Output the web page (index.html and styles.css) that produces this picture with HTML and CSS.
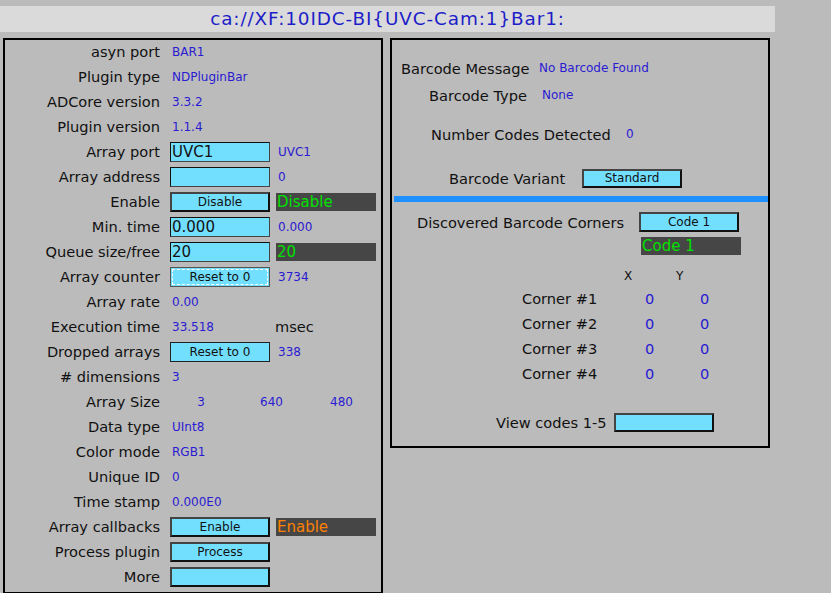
FILE: index.html
```html
<!DOCTYPE html>
<html>
<head>
<meta charset="utf-8">
<link rel="stylesheet" href="styles.css">
</head>
<body>
<div class="title">ca://XF:10IDC-BI{UVC-Cam:1}Bar1:</div>
<div class="main">
  <div class="panel left">
    <div class="row"><span class="lbl">asyn port</span><span class="val">BAR1</span></div>
    <div class="row"><span class="lbl">Plugin type</span><span class="val">NDPluginBar</span></div>
    <div class="row"><span class="lbl">ADCore version</span><span class="val">3.3.2</span></div>
    <div class="row"><span class="lbl">Plugin version</span><span class="val">1.1.4</span></div>
    <div class="row"><span class="lbl">Array port</span><span class="inp">UVC1</span><span class="val extra">UVC1</span></div>
    <div class="row"><span class="lbl">Array address</span><span class="inp"></span><span class="val extra">0</span></div>
    <div class="row"><span class="lbl">Enable</span><span class="btn">Disable</span><span class="dark green">Disable</span></div>
    <div class="row"><span class="lbl">Min. time</span><span class="inp">0.000</span><span class="val extra">0.000</span></div>
    <div class="row"><span class="lbl">Queue size/free</span><span class="inp">20</span><span class="dark green">20</span></div>
    <div class="row"><span class="lbl">Array counter</span><span class="btn focus">Reset to 0</span><span class="val extra">3734</span></div>
    <div class="row"><span class="lbl">Array rate</span><span class="val">0.00</span></div>
    <div class="row"><span class="lbl">Execution time</span><span class="val wide">33.518</span><span class="unit">msec</span></div>
    <div class="row"><span class="lbl">Dropped arrays</span><span class="btn thin">Reset to 0</span><span class="val extra">338</span></div>
    <div class="row"><span class="lbl"># dimensions</span><span class="val">3</span></div>
    <div class="row"><span class="lbl">Array Size</span><span class="dims"><span class="d1">3</span><span class="d2">640</span><span class="d3">480</span></span></div>
    <div class="row"><span class="lbl">Data type</span><span class="val">UInt8</span></div>
    <div class="row"><span class="lbl">Color mode</span><span class="val">RGB1</span></div>
    <div class="row"><span class="lbl">Unique ID</span><span class="val">0</span></div>
    <div class="row"><span class="lbl">Time stamp</span><span class="val">0.000E0</span></div>
    <div class="row"><span class="lbl">Array callbacks</span><span class="btn">Enable</span><span class="dark orange">Enable</span></div>
    <div class="row"><span class="lbl">Process plugin</span><span class="btn">Process</span></div>
    <div class="row"><span class="lbl">More</span><span class="btn"></span></div>
  </div>
  <div class="panel right">
    <div class="rrow r1"><span class="rl">Barcode Message</span><span class="rv">No Barcode Found</span></div>
    <div class="rrow r2"><span class="rl">Barcode Type</span><span class="rv">None</span></div>
    <div class="rrow r3"><span class="rl">Number Codes Detected</span><span class="rv">0</span></div>
    <div class="rrow r4"><span class="rl">Barcode Variant</span><span class="btn rbtn">Standard</span></div>
    <div class="sep"></div>
    <div class="rrow r5"><span class="rl">Discovered Barcode Corners</span><span class="btn rbtn">Code 1</span></div>
    <div class="rrow r6"><span class="dark green">Code 1</span></div>
    <div class="rrow r7"><span class="hx">X</span><span class="hy">Y</span></div>
    <div class="corner"><span class="cl">Corner #1</span><span class="cx">0</span><span class="cy">0</span></div>
    <div class="corner"><span class="cl">Corner #2</span><span class="cx">0</span><span class="cy">0</span></div>
    <div class="corner"><span class="cl">Corner #3</span><span class="cx">0</span><span class="cy">0</span></div>
    <div class="corner"><span class="cl">Corner #4</span><span class="cx">0</span><span class="cy">0</span></div>
    <div class="rrow r8"><span class="rl">View codes 1-5</span><span class="btn rbtn"></span></div>
  </div>
</div>
</body>
</html>
```
FILE: styles.css
```css
html, body {
  margin: 0;
  padding: 0;
  background: #bbbbbb;
  font-family: "DejaVu Sans", sans-serif;
  color: #111;
  width: 831px;
  height: 593px;
  overflow: hidden;
}

.title {
  margin-top: 6px;
  width: 775px;
  height: 26px;
  background: #dadada;
  color: #1e1ec8;
  font-size: 18.4px;
  letter-spacing: 0.9px;
  line-height: 26px;
  text-align: center;
}

.main {
  display: flex;
  align-items: flex-start;
  margin-top: 6px;
  padding-left: 3px;
}

.panel {
  border: 2px solid #000;
  box-sizing: border-box;
}

.left {
  width: 380px;
  height: 556px;
}

.right {
  margin-left: 7px;
  width: 380px;
  height: 410px;
}

.row {
  box-sizing: border-box;
  display: flex;
  align-items: center;
  height: 25px;
  padding-bottom: 2px;
}

.lbl {
  width: 155px;
  text-align: right;
  font-size: 14.6px;
  margin-right: 10px;
}

.val {
  font-size: 12px;
  color: #2a1ad2;
  padding-left: 2px;
}

.val.extra {
  margin-left: 6px;
  width: 98px;
}

.val.wide {
  width: 103px;
}

.unit {
  font-size: 14.6px;
}

.inp {
  box-sizing: border-box;
  width: 100px;
  height: 20px;
  background: #73dfff;
  border: 1px solid #111;
  border-right-color: #444;
  border-bottom-color: #444;
  font-size: 15px;
  line-height: 18px;
  padding-left: 1px;
}

.btn {
  box-sizing: border-box;
  width: 100px;
  height: 20px;
  background: #73dfff;
  border: 2px solid #111;
  border-top-color: #444;
  border-left-color: #444;
  font-size: 12px;
  line-height: 16px;
  text-align: center;
  color: #111;
}

.btn.focus {
  border: 1px solid #555;
  outline: 1px dashed #fff;
  outline-offset: -3px;
  line-height: 18px;
}

.btn.thin {
  border: 1px solid #222;
  line-height: 18px;
}

.dark {
  box-sizing: border-box;
  width: 100px;
  height: 18px;
  background: #464646;
  font-size: 15px;
  line-height: 18px;
  padding-left: 1px;
}

.row .dark {
  margin-left: 6px;
}

.green {
  color: #00e000;
}

.orange {
  color: #ff8000;
}

.dims {
  display: flex;
  font-size: 12px;
  color: #2a1ad2;
}

.dims span {
  text-align: right;
}

.d1 { width: 35px; }
.d2 { width: 78px; }
.d3 { width: 70px; }

/* right panel */
.rrow {
  display: flex;
  align-items: center;
  height: 24px;
}

.rl {
  font-size: 14.6px;
}

.rv {
  font-size: 12px;
  color: #2a1ad2;
}

.r1 { margin-top: 16px; padding-left: 9px; }
.r1 .rl { width: 138px; }
.r2 { margin-top: 3px; padding-left: 37px; }
.r2 .rl { width: 113px; }
.r3 { margin-top: 15px; padding-left: 39px; }
.r3 .rl { width: 195px; }
.r4 { margin-top: 20px; padding-left: 57px; }
.r4 .rl { width: 133px; }

.rbtn {
  height: 19px;
  line-height: 15px;
}

.sep {
  margin-top: 6px;
  margin-left: 2px;
  height: 6px;
  background: #1e90ff;
}

.r5 { margin-top: 8px; padding-left: 25px; }
.r5 .rl { width: 222px; }
.r5 .rbtn { height: 20px; line-height: 16px; }
.r6 { margin-top: 3px; padding-left: 249px; height: 18px; }

.r7 {
  margin-top: 11px;
  height: 20px;
  font-size: 12px;
}
.hx { margin-left: 232px; width: 52px; }

.corner {
  display: flex;
  align-items: center;
  height: 25px;
  font-size: 14.6px;
}
.cl { margin-left: 130px; width: 123px; }
.cx { width: 55px; color: #2a1ad2; }
.cy { color: #2a1ad2; }

.r8 { margin-top: 24px; padding-left: 104px; }
.r8 .rl { width: 118px; }
```
